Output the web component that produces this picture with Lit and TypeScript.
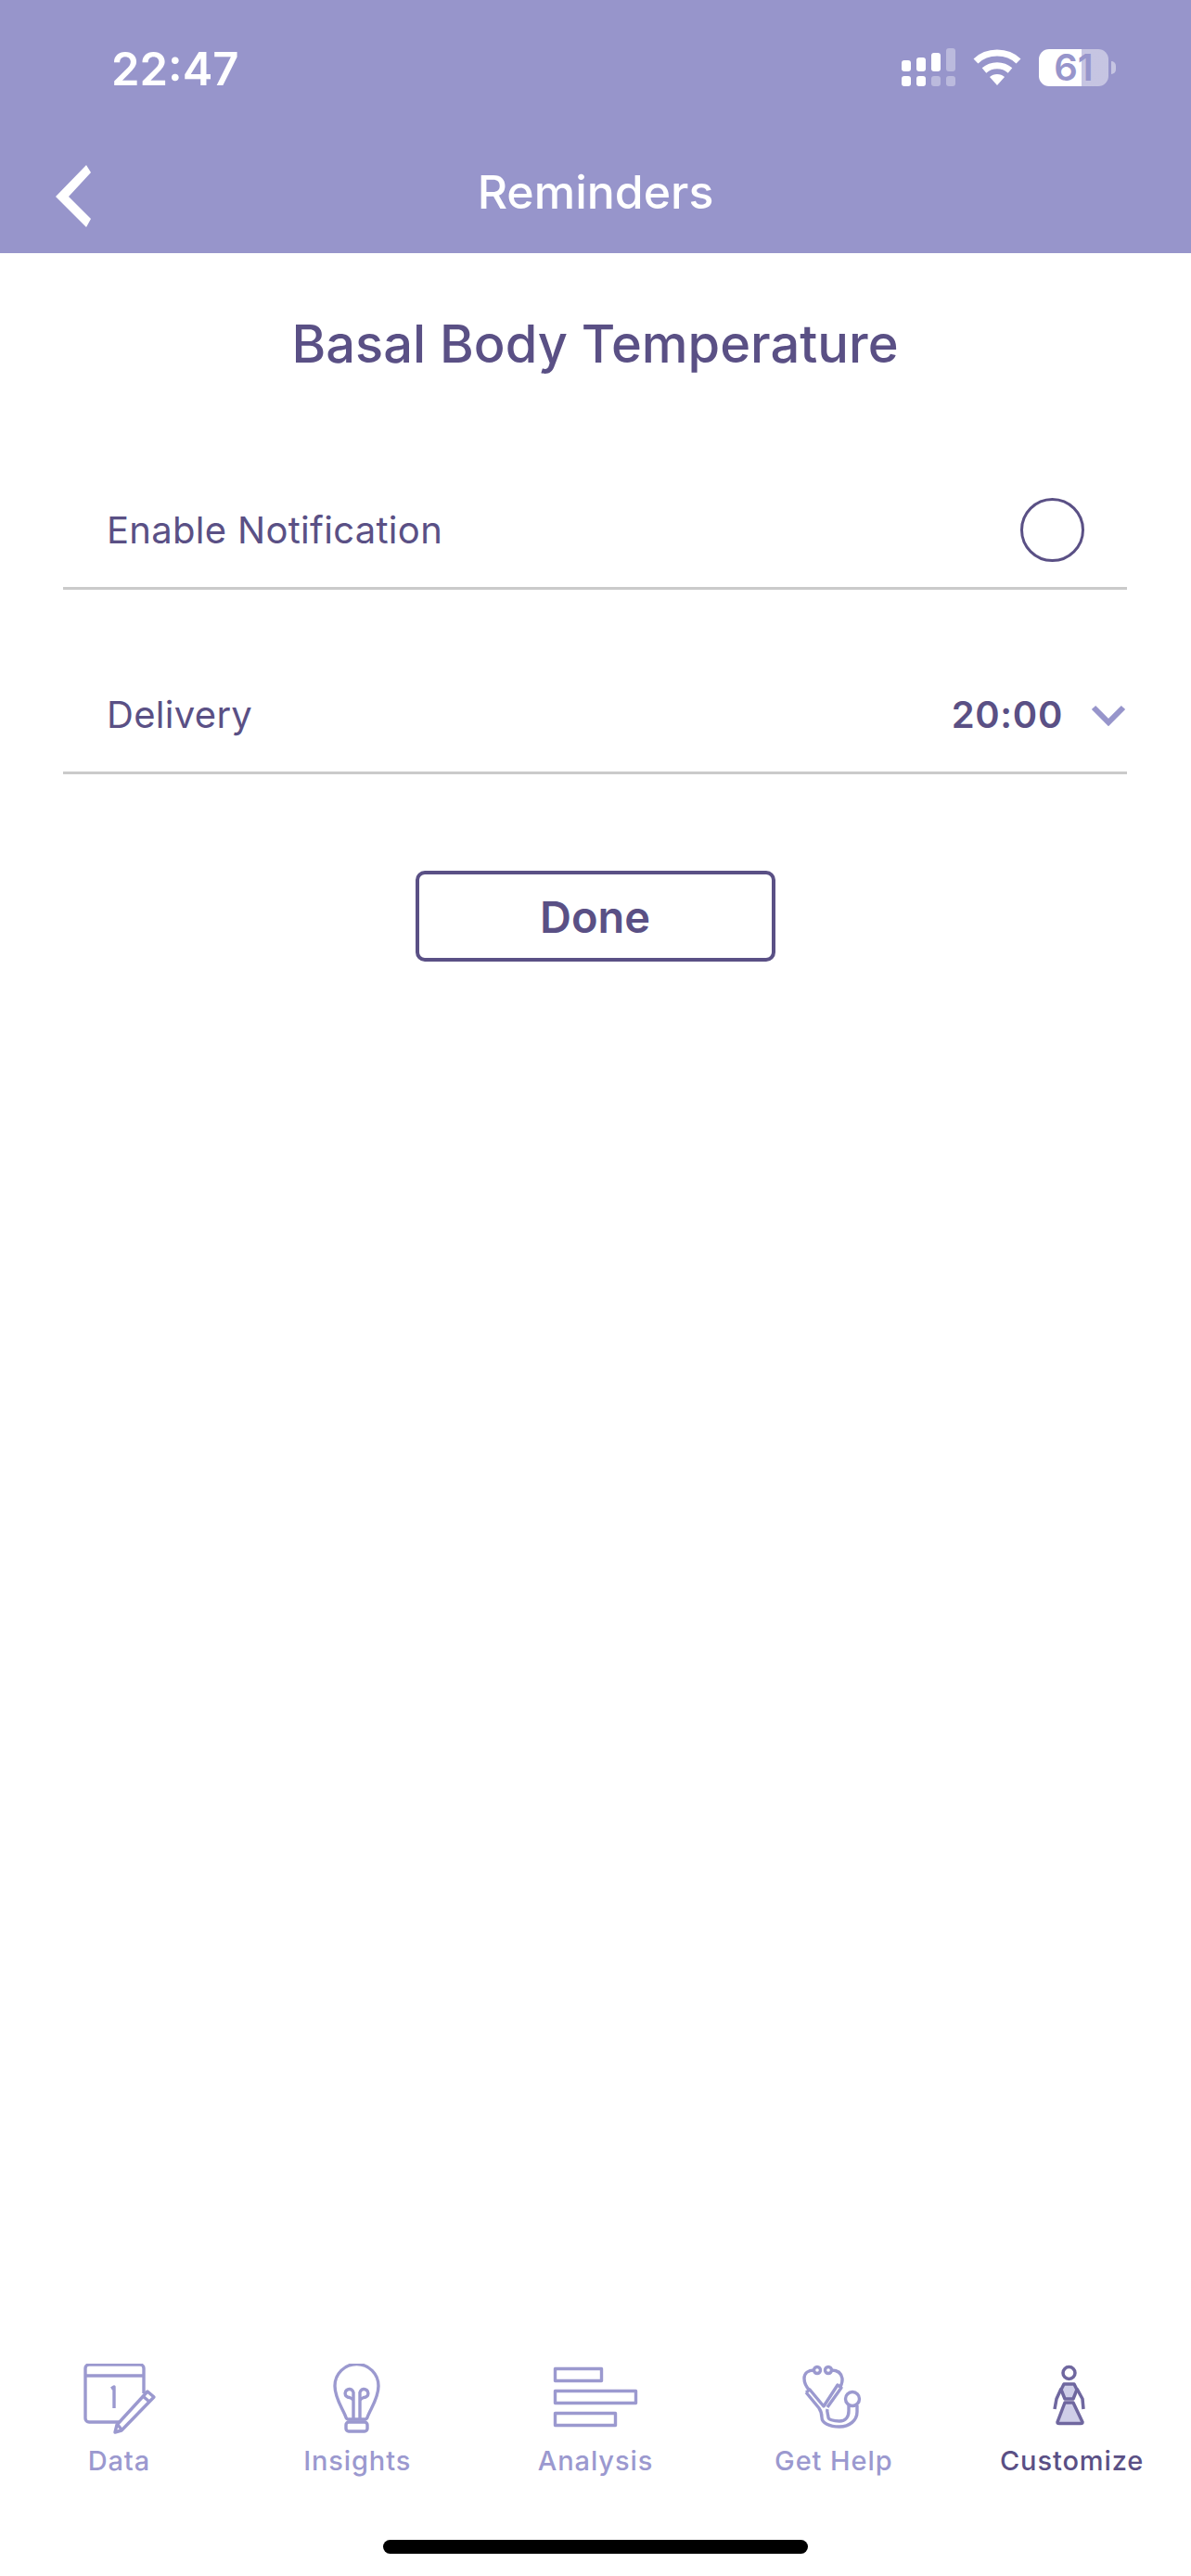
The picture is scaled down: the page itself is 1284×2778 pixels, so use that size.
import { LitElement, html, css, svg } from "lit";
import { customElement, property } from "lit/decorators.js";

const TABS = [
	{
		label: "Data",
		icon: svg`
			<path d="M49 63H16a4 4 0 0 1-4-4V5a4 4 0 0 1 4-4h55a4 4 0 0 1 4 4v27" />
			<path d="M12 13h63" />
			<path d="M40 27l3-2v23" />
			<path d="M79 30l7 6-35 36-7 2 2-8z" />
			<path d="M74 35l7 6" />
			<path d="M47 66l4 5" />`,
	},
	{
		label: "Insights",
		icon: svg`
			<path d="M36 58C33 49 24 38 24 24a23.5 23.5 0 0 1 47 0C71 38 62 49 59 58c-.5 1.5-1.5 2-3 2H39c-1.5 0-2.5-.5-3-2z" />
			<rect x="36" y="63" width="23" height="10" rx="3" />
			<path d="M44 59V33a4.500 4.500 0 1 0-4 3.500c2.500 1 3.500 2 4 3.500" />
			<path d="M51 59V33a4.500 4.500 0 1 1 4 3.500c-2.500 1-3.500 2-4 3.500" />`,
	},
	{
		label: "Analysis",
		icon: svg`
			<rect x="4.5" y="5.5" width="50" height="13" />
			<rect x="4.5" y="29.5" width="87" height="13" />
			<rect x="4.5" y="53.5" width="65" height="13" />`,
	},
	{
		label: "Get Help",
		icon: svg`
			<circle cx="30" cy="7" r="3.5" />
			<circle cx="42" cy="7" r="3.5" />
			<path d="M26.5 7c-6 0-10.500 3-10.500 9 0 5 3 10 6 13" />
			<path d="M45.5 7c6 0 10.500 3 11.500 9 .5 4-.5 6-2 9" />
			<path d="M18 31l4-3 15 18 15-23 4 3-15 21" />
			<path d="M18 31l14 17c2 3 3 6 3 10 0 6 8 10 19 10s19-7 19-16v-7" />
			<path d="M41 49c-1 3 1 6 1 9 0 2 5 4 12 4s10-5 10-11v-6" />
			<circle cx="68" cy="38" r="7.5" />`,
	},
	{
		label: "Customize",
		icon: svg`
			<circle cx="44.5" cy="10" r="6.5" />
			<path class="fill" d="M39 22h11l3 6-4 10h-9l-4-10z" />
			<path class="fill" d="M40 42h9l10 21c0 1-1 1.500-2 1.500H34c-1 0-2-.5-2-1.500z" />
			<path d="M36 27l-5 11-2 11" />
			<path d="M53 27l6 11 1 11" />`,
	},
];

@customElement("tab-item")
export class TabItem extends LitElement {
	static override styles = css`
		:host {
			display: flex;
			flex-direction: column;
			align-items: center;
			gap: 3px;
			font-size: 29px;
			font-weight: 500;
			letter-spacing: 0.9px;
			color: #9b99cf;
		}
		:host([active]) {
			color: #5a5085;
		}
		svg {
			height: 84px;
			width: 96px;
			fill: none;
			stroke: #9b99cf;
			stroke-width: 3.4;
			stroke-linejoin: round;
		}
		:host([active]) svg {
			stroke: #6f679f;
			stroke-width: 3.5;
		}
		.fill {
			fill: #cfcee8;
		}
	`;

	@property({ type: Boolean, reflect: true }) active = false;
	@property() label = "";
	@property({ attribute: false }) icon: unknown = null;

	override render() {
		return html`
			<svg viewBox="0 0 96 84">${this.icon}</svg>
			<span>${this.label}</span>
		`;
	}
}

@customElement("app-root")
export class AppRoot extends LitElement {
	static override styles = css`
		:host {
			display: flex;
			flex-direction: column;
			height: 2778px;
			background: #fff;
			font-family: Inter, "Liberation Sans", sans-serif;
			color: #5a5085;
		}
		.top {
			background: #9795cb;
			height: 273px;
			color: #fff;
		}
		.status {
			display: flex;
			justify-content: space-between;
			align-items: center;
			height: 148px;
			padding: 0 89px 0 120px;
			box-sizing: border-box;
		}
		.time {
			font-size: 49px;
			font-weight: 600;
		}
		.status-icons {
			display: flex;
			align-items: center;
			gap: 19px;
			padding-bottom: 3px;
		}
		.battery {
			position: relative;
			display: flex;
			align-items: center;
			justify-content: center;
			width: 75px;
			height: 40px;
			border-radius: 11px;
			font-size: 40px;
			font-weight: 600;
			line-height: 1;
			color: #9795cb;
		}
		.battery::after {
			content: "";
			position: absolute;
			left: 78px;
			top: 13px;
			width: 5px;
			height: 14px;
			border-radius: 0 7px 7px 0;
			background: rgba(255, 255, 255, 0.45);
		}
		.nav {
			display: grid;
			grid-template-columns: 100px 1fr 100px;
			align-items: center;
			height: 117px;
			padding: 0 60px;
		}
		.nav h1 {
			margin: 0;
			text-align: center;
			font-size: 50px;
			font-weight: 500;
		}
		.back {
			display: block;
			width: 38px;
			height: 67px;
			margin-top: 10px;
		}
		.content {
			flex: 1;
			display: flex;
			flex-direction: column;
			padding: 0 69px 0 68px;
		}
		h2 {
			margin: 62px 0 0;
			height: 72px;
			line-height: 72px;
			text-align: center;
			font-size: 56px;
			font-weight: 500;
		}
		.row {
			display: flex;
			justify-content: space-between;
			align-items: center;
			height: 123px;
			padding: 0 1px 0 47px;
			border-bottom: 3px solid #cacaca;
			font-size: 40px;
			letter-spacing: 0.3px;
		}
		.row.first {
			margin-top: 103px;
			padding-right: 46px;
		}
		.row.second {
			margin-top: 73px;
		}
		.toggle {
			width: 69px;
			height: 69px;
			box-sizing: border-box;
			border: 3px solid #5a5085;
			border-radius: 50%;
		}
		.value {
			display: flex;
			align-items: center;
			gap: 30px;
			font-weight: 600;
			letter-spacing: 0.7px;
		}
		.chevron {
			display: block;
			width: 38px;
			height: 24px;
		}
		.done {
			align-self: center;
			width: 388px;
			height: 98px;
			margin-top: 104px;
			box-sizing: border-box;
			border: 4px solid #5a5085;
			border-radius: 10px;
			background: none;
			font: 600 47px Inter, "Liberation Sans", sans-serif;
			color: #5a5085;
		}
		.tabs {
			display: grid;
			grid-template-columns: repeat(5, 1fr);
			height: 144px;
			padding-bottom: 85px;
		}
		.home {
			position: absolute;
			left: 413px;
			top: 2739px;
			width: 458px;
			height: 15px;
			border-radius: 8px;
			background: #000;
		}
	`;

	batteryLevel = 61;

	override render() {
		return html`
			<div class="top">
				<div class="status">
					<span class="time">22:47</span>
					<div class="status-icons">
						<svg width="58" height="41" viewBox="0 0 58 41" fill="#fff">
							<rect x="0" y="13" width="10" height="12" rx="3" />
							<rect x="16" y="10" width="10" height="15" rx="3" />
							<rect x="32" y="5" width="10" height="20" rx="3" />
							<rect x="48" y="0" width="10" height="25" rx="3" opacity=".35" />
							<rect x="0" y="30" width="10" height="11" rx="3" />
							<rect x="16" y="30" width="10" height="11" rx="3" />
							<rect x="32" y="30" width="10" height="11" rx="3" opacity=".35" />
							<rect x="48" y="30" width="10" height="11" rx="3" opacity=".35" />
						</svg>
						<svg width="52" height="40" viewBox="0 0 52 40" fill="none" stroke="#fff" stroke-width="7">
							<path d="M3 13C15 1 37 1 49 13" />
							<path d="M12 23c8-7 20-7 28 0" />
							<path d="M18 30c4-4 12-4 16 0L26 39z" fill="#fff" stroke="none" />
						</svg>
						<div
							class="battery"
							style="background: linear-gradient(90deg, #fff ${this.batteryLevel}%, rgba(255,255,255,.45) ${this.batteryLevel}%)"
						>
							${this.batteryLevel}
						</div>
					</div>
				</div>
				<div class="nav">
					<svg class="back" viewBox="0 0 38 67">
						<path d="M33 0l5 8L14 34l24 24-5 9L0 34z" fill="#fff" />
					</svg>
					<h1>Reminders</h1>
				</div>
			</div>
			<div class="content">
				<h2>Basal Body Temperature</h2>
				<div class="row first">
					<span>Enable Notification</span>
					<span class="toggle"></span>
				</div>
				<div class="row second">
					<span>Delivery</span>
					<span class="value">
						20:00
						<svg class="chevron" viewBox="0 0 38 24" fill="none" stroke="#9795cb" stroke-width="6">
							<path d="M3 4l16 16L35 4" />
						</svg>
					</span>
				</div>
				<button class="done">Done</button>
			</div>
			<div class="tabs">
				${TABS.map(
					(t) => html`<tab-item
						.label=${t.label}
						.icon=${t.icon}
						?active=${t.label === "Customize"}
					></tab-item>`,
				)}
			</div>
			<div class="home"></div>
		`;
	}
}
